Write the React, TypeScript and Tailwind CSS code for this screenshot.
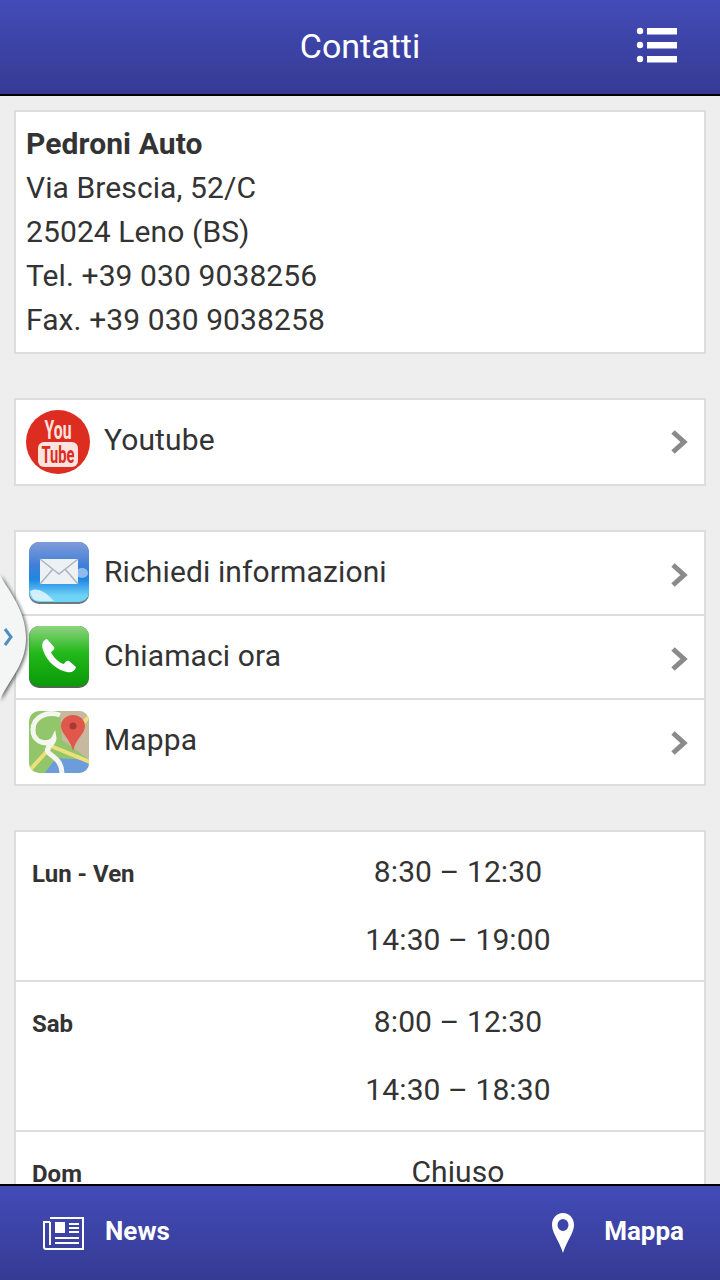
// App.tsx — Contatti screen (Pedroni Auto)
import type { ReactNode } from 'react';

const FONT = "font-['Roboto','Liberation_Sans',sans-serif]";

// ---- Icons ----------------------------------------------------------------

function YoutubeIcon() {
  return (
    <svg width="64" height="64" viewBox="0 0 64 64">
      <circle cx="32" cy="32" r="32" fill="#dd2c20" />
      <text x="32" y="29" textAnchor="middle" fontSize="25" fontWeight="700" fill="#fbe3df" fontFamily="Roboto, sans-serif" textLength="27" lengthAdjust="spacingAndGlyphs">You</text>
      <rect x="12" y="32" width="40" height="25" rx="6" fill="#fbe3df" />
      <text x="32" y="53" textAnchor="middle" fontSize="24" fontWeight="700" fill="#dd2c20" fontFamily="Roboto, sans-serif" textLength="33" lengthAdjust="spacingAndGlyphs">Tube</text>
    </svg>
  );
}

function MailIcon() {
  return (
    <svg width="62" height="64" viewBox="0 0 62 64">
      <defs>
        <linearGradient id="mailBg" x1="0" y1="0" x2="0" y2="1">
          <stop offset="0" stopColor="#7f9bd9" />
          <stop offset="0.4" stopColor="#3f7fd8" />
          <stop offset="0.62" stopColor="#1f86e4" />
          <stop offset="0.9" stopColor="#6fd4f6" />
        </linearGradient>
      </defs>
      <rect x="1" y="1" width="60" height="62" rx="10" fill="#6b7a80" />
      <rect x="1" y="1" width="60" height="60" rx="10" fill="url(#mailBg)" />
      <path d="M2 50 C8 46 16 50 22 56 L26 60 L12 60 Q3 60 2 50Z" fill="#e4f6fc" opacity="0.85" />
      <ellipse cx="54" cy="32" rx="6" ry="5" fill="#a9c9ef" opacity="0.8" />
      <rect x="12" y="18" width="38" height="25" fill="#eef1f4" />
      <path d="M12 18 L31 33 L50 18 M12 43 L25 28 M50 43 L37 28" fill="none" stroke="#a9b4c4" strokeWidth="1.5" />
    </svg>
  );
}

function PhoneIcon() {
  return (
    <svg width="62" height="64" viewBox="0 0 62 64">
      <defs>
        <linearGradient id="phoneBg" x1="0" y1="0" x2="0" y2="1">
          <stop offset="0" stopColor="#8fd47f" />
          <stop offset="0.45" stopColor="#22b81a" />
          <stop offset="1" stopColor="#0a9a08" />
        </linearGradient>
      </defs>
      <rect x="1" y="1" width="60" height="62" rx="10" fill="#4c6a4c" />
      <rect x="1" y="1" width="60" height="60" rx="10" fill="url(#phoneBg)" />
      <path d="M19 14 C15 15 13 19 15 25 C19 37 29 45 39 47 C44 48 47 46 48 42 L41 36 C39 35 37 37 36 39 C31 38 25 32 23 27 C25 26 27 24 26 22 Z" fill="#fff" />
    </svg>
  );
}

function MapsIcon() {
  return (
    <svg width="62" height="64" viewBox="0 0 62 64" className="mt-[2px]">
      <defs>
        <clipPath id="mapsClip">
          <rect x="1" y="1" width="60" height="62" rx="10" />
        </clipPath>
      </defs>
      <g clipPath="url(#mapsClip)">
        <rect width="62" height="64" fill="#93c66a" />
        <path d="M32 1 H62 V50 L34 30Z" fill="#c7b8a0" />
        <path d="M16 64 L28 48 L62 50 V64Z" fill="#6c9cdc" />
        <path d="M0 62 L22 38 M18 34 L62 52 M40 28 L62 6" stroke="#ecdf7c" strokeWidth="4" fill="none" />
        <path d="M32 5 C20 1 5 6 5 20 C5 34 22 36 26 28 C27 34 14 38 22 44 C30 50 34 54 34 64" fill="none" stroke="#f4f6f0" strokeWidth="5" />
      </g>
      <path d="M45 5 C38 5 33 10 33 16 C33 24 42 28 45 41 C48 28 57 24 57 16 C57 10 52 5 45 5Z" fill="#e2574c" />
      <circle cx="45" cy="16" r="3.5" fill="#a83a34" />
    </svg>
  );
}

function Chevron({ className }: { className?: string }) {
  return (
    <svg width="18" height="26" viewBox="0 0 18 26" className={`shrink-0 ${className ?? ''}`}>
      <path d="M3 3 L14 13 L3 23" fill="none" stroke="#8a8a8a" strokeWidth="5" />
    </svg>
  );
}

function MenuIcon() {
  return (
    <svg width="42" height="36" viewBox="0 0 42 36" className="block">
      <circle cx="4" cy="4" r="3.2" fill="#fff" />
      <circle cx="4" cy="18" r="3.2" fill="#fff" />
      <circle cx="4" cy="32" r="3.2" fill="#fff" />
      <rect x="11" y="1" width="30" height="6.5" fill="#fff" />
      <rect x="11" y="15" width="30" height="6.5" fill="#fff" />
      <rect x="11" y="29" width="30" height="6.5" fill="#fff" />
    </svg>
  );
}

function NewsIcon() {
  return (
    <svg width="42" height="36" viewBox="0 0 42 36" className="block">
      <path d="M7 3 H40 V34 H3 Q1 34 1 32 V7 H7 M7 7 V30" fill="none" stroke="#fff" strokeWidth="2" />
      <rect x="12" y="7" width="10" height="11" fill="#fff" />
      <path d="M26 9 H36 M26 13 H36 M26 17 H36 M12 23 H36 M12 28 H36" stroke="#fff" strokeWidth="2" />
    </svg>
  );
}

function PinIcon() {
  return (
    <svg width="22" height="40" viewBox="0 0 24 40" preserveAspectRatio="none" className="block">
      <path fillRule="evenodd" d="M12 0 C5 0 0 5 0 12 C0 20 8 28 12 40 C16 28 24 20 24 12 C24 5 19 0 12 0Z M12 6 A6 6 0 1 1 12 18 A6 6 0 1 1 12 6Z" fill="#fff" />
    </svg>
  );
}

// ---- Pieces ---------------------------------------------------------------

function Bar({ children, className }: { children: ReactNode; className: string }) {
  return (
    <div className={`shrink-0 bg-gradient-to-b from-[#434bb8] to-[#353b93] border-black ${className}`}>
      {children}
    </div>
  );
}

function LinkRow({ icon, label, tall }: { icon: ReactNode; label: string; tall?: boolean }) {
  return (
    <div className={`flex items-center box-content pr-[16px] ${tall ? 'h-[84px] pl-[10px]' : 'h-[82px] pl-[11px]'}`}>
      <div className="w-[64px] shrink-0 flex justify-center">{icon}</div>
      <span className={`flex-1 text-[#333] text-[30px] leading-[44px] tracking-[0.12px] ${tall ? 'ml-[14px] mb-[4px]' : 'ml-[13px] mb-[3px]'}`}>
        {label}
      </span>
      <Chevron className={tall ? '' : 'mt-[4px]'} />
    </div>
  );
}

function HoursRow({ day, lines, last }: { day: string; lines: string[]; last?: boolean }) {
  return (
    <div className={`flex px-[16px] pt-[16px] ${last ? '' : 'h-[150px] border-b-2 border-[#ddd]'}`}>
      <div className="w-[324px] shrink-0 pt-[8px] text-[#333] text-[24px] leading-[36px] font-bold">{day}</div>
      <div className="w-[204px] text-center text-[#333] text-[30px] leading-[48px] tracking-[0.1px] whitespace-nowrap flex flex-col gap-[20px]">
        {lines.map((line) => (
          <div key={line}>{line}</div>
        ))}
      </div>
    </div>
  );
}

// ---- Page -----------------------------------------------------------------

export default function App() {
  return (
    <div className={`${FONT} relative w-[720px] h-[1280px] overflow-hidden flex flex-col bg-[#eee]`}>
      <Bar className="h-[96px] border-b-2 relative flex items-center justify-center">
        <h1 className="text-white text-[34px] font-normal leading-none mb-[2px]">Contatti</h1>
        <div className="absolute right-[42px] top-[27px]">
          <MenuIcon />
        </div>
      </Bar>

      <main className="flex-1 min-h-0 overflow-hidden px-[14px] pt-[14px] flex flex-col gap-[44px]">
        <section className="bg-white border-2 border-[#ddd] p-[10px] text-[#333] text-[30px] leading-[44px] tracking-[0.1px]">
          <div className="font-bold">Pedroni Auto</div>
          <div>Via Brescia, 52/C</div>
          <div>25024 Leno (BS)</div>
          <div>Tel. +39 030 9038256</div>
          <div>Fax. +39 030 9038258</div>
        </section>

        <section className="bg-white border-2 border-[#ddd]">
          <LinkRow tall icon={<YoutubeIcon />} label="Youtube" />
        </section>

        <section className="bg-white border-2 border-[#ddd] pb-[2px] divide-y-2 divide-[#ddd]">
          <LinkRow icon={<MailIcon />} label="Richiedi informazioni" />
          <LinkRow icon={<PhoneIcon />} label="Chiamaci ora" />
          <LinkRow icon={<MapsIcon />} label="Mappa" />
        </section>

        <section className="shrink-0 bg-white border-2 border-[#ddd]">
          <HoursRow day="Lun - Ven" lines={['8:30 – 12:30', '14:30 – 19:00']} />
          <HoursRow day="Sab" lines={['8:00 – 12:30', '14:30 – 18:30']} />
          <HoursRow last day="Dom" lines={['Chiuso']} />
        </section>
      </main>

      <Bar className="h-[96px] border-t-2 flex items-center justify-between pl-[43px] pr-[36px]">
        <div className="flex items-center gap-[20px]">
          <NewsIcon />
          <span className="text-white text-[26px] font-bold mb-[4px]">News</span>
        </div>
        <div className="flex items-center gap-[30px]">
          <PinIcon />
          <span className="text-white text-[26px] font-bold mb-[4px]">Mappa</span>
        </div>
      </Bar>

      {/* side drawer handle, over the list */}
      <svg width="40" height="150" viewBox="0 0 40 150" className="absolute left-0 top-[562px] drop-shadow-[1px_1px_2px_rgba(0,0,0,0.75)]">
        <path d="M-2 10 C8 28 26 48 26 76 C26 104 8 118 -2 142 Z" fill="#f4f6f6" />
        <path d="M5 67 L11 75 L5 83" fill="none" stroke="#4f8fc0" strokeWidth="3" />
      </svg>
    </div>
  );
}
